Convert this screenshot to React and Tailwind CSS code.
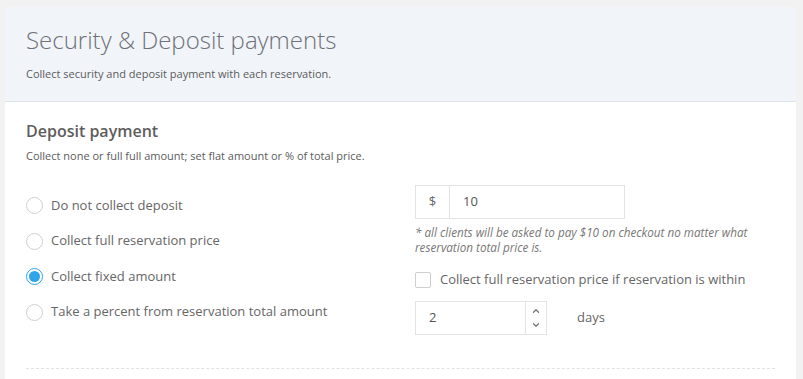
import { ChevronUp, ChevronDown } from 'lucide-react';

const options = [
  { label: 'Do not collect deposit', checked: false },
  { label: 'Collect full reservation price', checked: false },
  { label: 'Collect fixed amount', checked: true },
  { label: 'Take a percent from reservation total amount', checked: false },
];

const Radio = ({ checked }) => (
  <span
    className={`flex h-[17px] w-[17px] shrink-0 items-center justify-center rounded-full border bg-white ${
      checked ? 'border-[#2fa4e7]' : 'border-[#cfcfcf]'
    }`}
  >
    {checked && <span className="h-[11px] w-[11px] rounded-full bg-[#2fa4e7]" />}
  </span>
);

export default function App() {
  return (
    <div
      className="h-[379px] w-[803px] overflow-hidden bg-[#f2f2f2] pl-[5px] pt-[7px]"
      style={{ fontFamily: '"Open Sans", "Liberation Sans", sans-serif' }}
    >
      <div className="w-[791px] bg-white">
        {/* Header */}
        <div className="h-[95px] border-b border-[#dfe4ea] bg-[#f1f4f9] px-[21px] pt-[16px]">
          <h1 className="text-[24px] font-light leading-[34px] text-[#6e7178]">
            Security &amp; Deposit payments
          </h1>
          <p className="mt-[9px] text-[11px] leading-[16px] text-[#5b5b5b]">
            Collect security and deposit payment with each reservation.
          </p>
        </div>

        {/* Body */}
        <div className="h-[277px] px-[21px] pt-[17px]">
          <h2 className="text-[16px] font-semibold leading-[24px] text-[#5d5d5d]">
            Deposit payment
          </h2>
          <p className="mt-[5px] text-[11px] leading-[16px] text-[#5b5b5b]">
            Collect none or full full amount; set flat amount or % of total price.
          </p>

          <div className="mt-[21px] flex h-[165px]">
            {/* Options */}
            <div className="flex w-[390px] flex-col gap-[18.5px] pt-[12px]">
              {options.map((o) => (
                <label key={o.label} className="flex h-[17px] items-center gap-[8px]">
                  <Radio checked={o.checked} />
                  <span className="text-[13px] text-[#666]">{o.label}</span>
                </label>
              ))}
            </div>

            {/* Amount */}
            <div className="flex w-[361px] flex-col">
              <div className="flex h-[34px] w-[210px] border border-[#e3e3e3]">
                <span className="flex w-[34px] items-center justify-center border-r border-[#e3e3e3] text-[13px] text-[#666]">
                  $
                </span>
                <span className="flex items-center pl-[13px] text-[13px] text-[#555]">10</span>
              </div>
              <p className="mt-[6px] text-[11.7px] italic leading-[15px] text-[#777]">
                * all clients will be asked to pay $10 on checkout no matter what reservation total price is.
              </p>
              <label className="mt-[16px] flex h-[17px] items-center gap-[9px]">
                <span className="h-[16px] w-[16px] rounded-[2px] border border-[#cfcfcf] bg-white" />
                <span className="text-[13px] text-[#666]">
                  Collect full reservation price if reservation is within
                </span>
              </label>
              <div className="mt-[13px] flex items-center">
                <div className="flex h-[34px] w-[132px] border border-[#e3e3e3]">
                  <span className="flex flex-1 items-center pl-[13px] text-[13px] text-[#555]">2</span>
                  <span className="flex w-[21px] flex-col items-center justify-center border-l border-[#e3e3e3] text-[#777]">
                    <ChevronUp size={10} strokeWidth={3} />
                    <ChevronDown size={10} strokeWidth={3} className="mt-[4px]" />
                  </span>
                </div>
                <span className="ml-[30px] text-[13px] text-[#666]">days</span>
              </div>
            </div>
          </div>

          <div className="mt-[18px] border-t border-dashed border-[#e2e2e2]" />
        </div>
      </div>
    </div>
  );
}
